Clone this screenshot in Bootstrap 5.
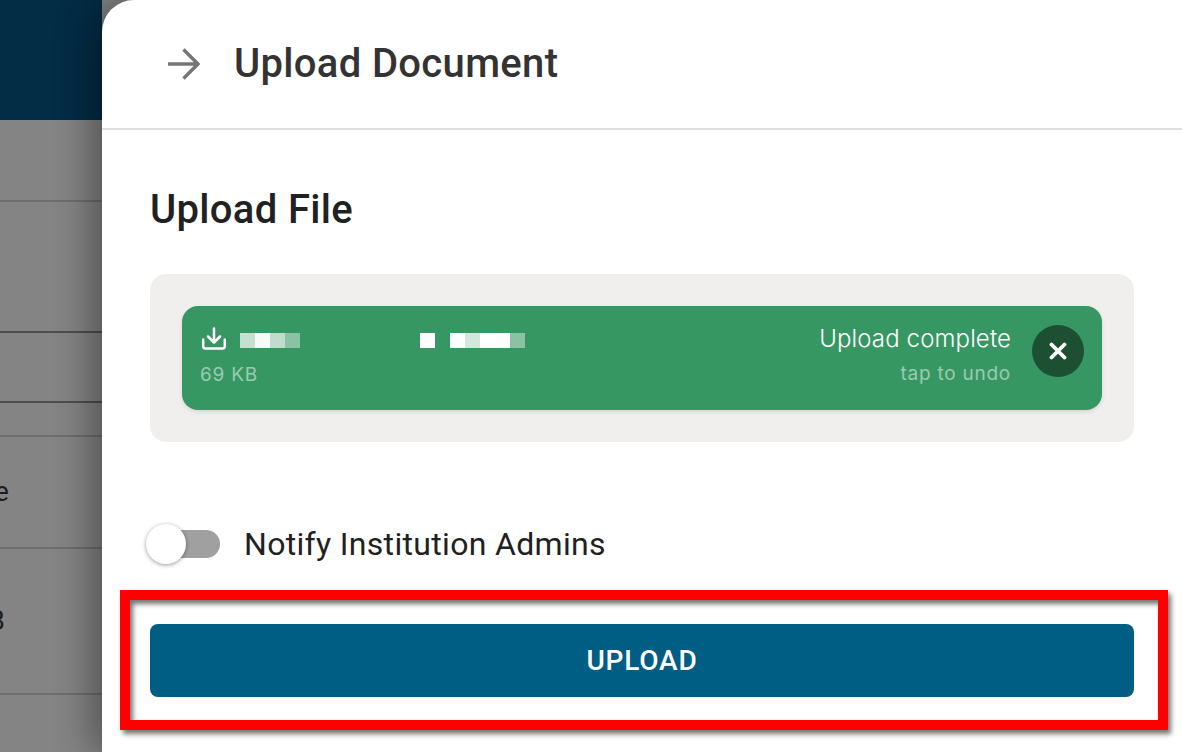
<!DOCTYPE html>
<html>
<head>
    <meta charset="utf-8">
    <title>Upload Document</title>
    <link href="https://cdn.jsdelivr.net/npm/bootstrap@5.3.3/dist/css/bootstrap.min.css" rel="stylesheet">
    <style>
        html, body { height: 100%; }
        body {
            width: 1182px;
            height: 752px;
            overflow: hidden;
            background: #848484;
            font-family: Roboto, "Liberation Sans", sans-serif;
            color: #212121;
        }
        .shell { height: 752px; }

        /* dimmed page behind the drawer */
        .behind { width: 102px; flex: none; overflow: hidden; }
        .behind-top { height: 120px; background: #032c45; }
        .behind-row { border-bottom: 2px solid #6e6e6e; font-size: 27px; color: #1d1d1d; line-height: 1; }
        .behind-row.strong { border-bottom-color: #4e4e4e; }
        .behind-row span { margin-left: -12px; }
        .r1 { height: 82px; }
        .r2 { height: 131px; }
        .r3 { height: 70px; }
        .r4 { height: 34px; }
        .r5 { height: 112px; }
        .r6 { height: 146px; }

        /* drawer */
        .drawer {
            position: relative;
            background: #fff;
            border-top-left-radius: 32px;
            box-shadow: -10px 0 36px rgba(0, 0, 0, .38);
        }
        .drawer-head { height: 130px; border-bottom: 2px solid #e0e0e0; padding-left: 64px; gap: 30px; }
        .drawer-title { font-size: 40px; font-weight: 500; color: #333; letter-spacing: .33px; margin: 0; }
        .section-title { font-size: 40px; font-weight: 500; color: #212121; letter-spacing: .33px; line-height: 44px; margin: 58px 0 42px; }
        .drawer-body { padding: 0 48px; }

        .drop-panel { height: 168px; padding: 32px; background: #f0efed; border-radius: 16px; }
        .file-item {
            height: 104px;
            background: #369763;
            border-radius: 16px;
            padding: 19px 18px 0;
            color: #fff;
            font-family: Inter, Roboto, sans-serif;
            box-shadow: 0 2px 4px rgba(0, 0, 0, .1);
        }
        .file-row { gap: 14px; margin-top: 1px; }
        .file-size { margin-top: 12px; }
        .file-undo { margin-top: 10px; }
        .file-meta { font-size: 19px; line-height: 22px; letter-spacing: .75px; color: rgba(255, 255, 255, .5); }
        .file-status { font-size: 24px; line-height: 28px; font-weight: 300; letter-spacing: .12px; }
        .file-name { height: 15px; margin-top: 2px; }
        .px-cell { display: block; width: 15px; height: 15px; background: #fff; }
        .px-gap { margin-left: 15px; }
        .px-gap-big { margin-left: 120px; }
        .file-right { gap: 21px; }
        .undo-btn {
            width: 52px;
            height: 52px;
            border: 0;
            padding: 0;
            border-radius: 50%;
            background: #1d4f33;
        }

        .toggle-row { margin-top: 82px; gap: 24px; height: 40px; font-size: 32px; letter-spacing: .32px; color: #212121; }
        .toggle-track { position: relative; display: block; width: 70px; height: 28px; background: #a0a0a0; border-radius: 14px; }
        .toggle-knob {
            position: absolute;
            left: -4px;
            top: -6px;
            width: 40px;
            height: 40px;
            border-radius: 50%;
            background: #fff;
            box-shadow: 0 1px 4px rgba(0, 0, 0, .4);
        }
        .upload-btn {
            height: 73px;
            margin-top: 60px;
            background: #005d83;
            border: 0;
            border-radius: 8px;
            color: #fff;
            font-size: 28px;
            font-weight: 500;
            letter-spacing: .8px;
        }

        /* red annotation laid over the shot */
        .callout {
            position: absolute;
            left: 18px;
            top: 590px;
            width: 1048px;
            height: 140px;
            border: 10px solid #f00;
            box-shadow: 3px 4px 5px rgba(0, 0, 0, .55), inset 3px 4px 5px rgba(0, 0, 0, .55);
            pointer-events: none;
        }
    </style>
</head>
<body>
    <div class="shell d-flex">
        <div class="behind d-flex flex-column">
            <div class="behind-top"></div>
            <div class="behind-row r1"></div>
            <div class="behind-row strong r2"></div>
            <div class="behind-row strong r3"></div>
            <div class="behind-row r4"></div>
            <div class="behind-row r5 d-flex align-items-center"><span>le</span></div>
            <div class="behind-row r6 d-flex align-items-center"><span>B</span></div>
        </div>

        <div class="drawer flex-grow-1">
            <div class="drawer-head d-flex align-items-center">
                <svg width="38" height="38" viewBox="0 0 38 38" fill="none" stroke="#757575" stroke-width="3.4" aria-hidden="true">
                    <path d="M2 19H32M17.500 4.500L32 19L17.500 33.500"/>
                </svg>
                <h1 class="drawer-title">Upload Document</h1>
            </div>
            <div class="drawer-body">
                <h2 class="section-title">Upload File</h2>
                <div class="drop-panel">
                    <div class="file-item d-flex align-items-start justify-content-between">
                        <div>
                            <div class="file-row d-flex align-items-center">
                                <svg width="26" height="26" viewBox="0 0 26 26" fill="none" stroke="#fff" stroke-width="2.500" stroke-linecap="round" stroke-linejoin="round" aria-hidden="true">
                                    <path d="M14 2.500V16M8 10.500L14 16.500L20 10.500M3.200 13.500V20C3.200 21.500 4 22.500 5.500 22.500H22.500C24 22.500 24.800 21.500 24.800 20V13.500"/>
                                </svg>
                                <div class="file-name d-flex">
                                    <span class="px-cell" style="opacity:.7"></span>
                                    <span class="px-cell" style="opacity:.95"></span>
                                    <span class="px-cell" style="opacity:.68"></span>
                                    <span class="px-cell" style="opacity:.42"></span>
                                    <span class="px-cell px-gap-big"></span>
                                    <span class="px-cell px-gap"></span>
                                    <span class="px-cell" style="opacity:.78"></span>
                                    <span class="px-cell"></span>
                                    <span class="px-cell"></span>
                                    <span class="px-cell" style="opacity:.42"></span>
                                </div>
                            </div>
                            <div class="file-meta file-size">69 KB</div>
                        </div>
                        <div class="file-right d-flex align-items-start">
                            <div class="text-end">
                                <div class="file-status">Upload complete</div>
                                <div class="file-meta file-undo">tap to undo</div>
                            </div>
                            <button class="undo-btn d-flex align-items-center justify-content-center" aria-label="Undo">
                                <svg width="18" height="18" viewBox="0 0 18 18" fill="none" stroke="#fff" stroke-width="3.800" stroke-linecap="round" aria-hidden="true">
                                    <path d="M2.500 2.500L15.500 15.500M15.500 2.500L2.500 15.500"/>
                                </svg>
                            </button>
                        </div>
                    </div>
                </div>
                <div class="toggle-row d-flex align-items-center">
                    <span class="toggle-track"><span class="toggle-knob"></span></span>
                    <span>Notify Institution Admins</span>
                </div>
                <button class="upload-btn btn w-100 d-flex align-items-center justify-content-center">UPLOAD</button>
            </div>
            <div class="callout"></div>
        </div>
    </div>
    <script src="https://cdn.jsdelivr.net/npm/bootstrap@5.3.3/dist/js/bootstrap.bundle.min.js"></script>
</body>
</html>
